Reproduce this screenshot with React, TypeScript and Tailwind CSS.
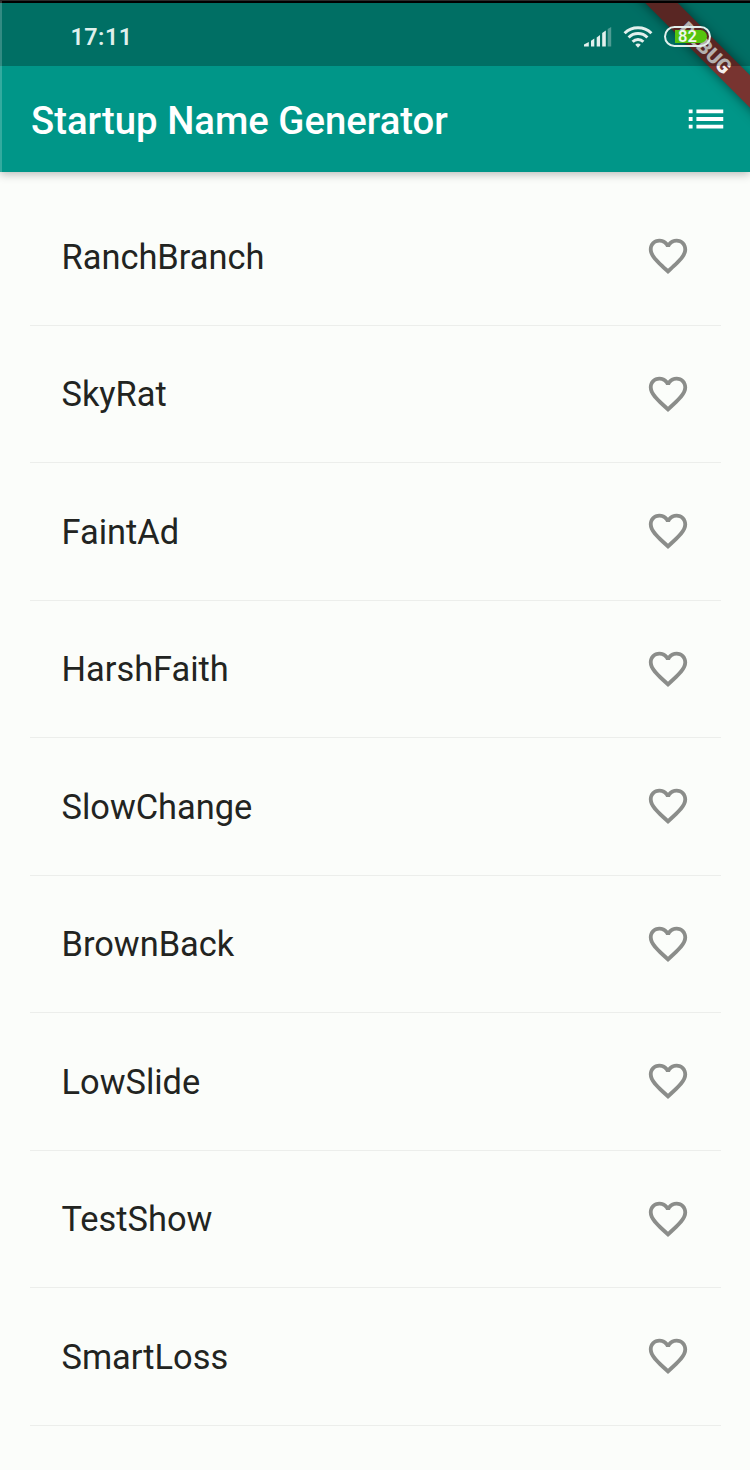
import React from "react";

const names: string[] = [
  "RanchBranch",
  "SkyRat",
  "FaintAd",
  "HarshFaith",
  "SlowChange",
  "BrownBack",
  "LowSlide",
  "TestShow",
  "SmartLoss",
];

function SignalIcon() {
  return (
    <svg className="h-[22px] w-[30px]" viewBox="0 0 30 22" fill="#e2f0ed">
      <path d="M2 20.500v-2l4.800-2.500v4.500z" />
      <path d="M9 20.500v-5.800l3.300-2.200v8z" />
      <path d="M14.700 20.500v-9l3.300-2.500v11.500z" />
      <path d="M20.200 20.500V7l3.600-2.500v16z" />
      <path d="M25.700 20.500V3l3.500-2v19.500z" opacity="0.35" />
    </svg>
  );
}

function WifiIcon() {
  return (
    <svg className="h-[24px] w-[32px]" viewBox="0 0 32 24" fill="none" stroke="#e2f0ed" strokeWidth="3">
      <path d="M2.600 8.200a19 19 0 0 1 26.800 0" />
      <path d="M6.600 12.500a13.300 13.300 0 0 1 18.800 0" />
      <path d="M10.600 16.700a7.700 7.700 0 0 1 10.800 0" />
      <path d="M16 22.800l-2.700-3.100a3.600 3.600 0 0 1 5.400 0z" fill="#e2f0ed" stroke="none" />
    </svg>
  );
}

function Battery() {
  return (
    <div className="relative h-[21px] w-[47px] overflow-hidden rounded-full border-2 border-[#e2f0ed]">
      <div className="absolute top-[2px] left-[9px] h-[13px] w-[32px] rounded-r-full bg-[#55c40e]" />
      <span className="absolute top-[-1px] left-[12px] text-[16.500px] leading-[20px] font-semibold text-[#eef8ec]">
        82
      </span>
    </div>
  );
}

function DebugBanner() {
  return (
    <div className="absolute top-[36px] left-[606px] flex h-[23px] w-[200px] rotate-45 items-center justify-center bg-[#783430] text-[20px] leading-none font-black text-[#f4efee] shadow-[0_0_12px_rgba(0,0,0,0.5)]">
      DEBUG
    </div>
  );
}

function ListIcon() {
  return (
    <svg className="size-[46px]" viewBox="0 0 24 24" fill="#fff">
      <path d="M3 13h2v-2H3v2zm0 4h2v-2H3v2zm0-8h2V7H3v2zm4 4h14v-2H7v2zm0 4h14v-2H7v2zM7 7v2h14V7H7z" />
    </svg>
  );
}

function HeartIcon() {
  return (
    <svg className="size-[46px]" viewBox="0 0 24 24" fill="#8b8d8a">
      <path d="M16.500 3c-1.740 0-3.410.81-4.500 2.090C10.910 3.810 9.240 3 7.500 3 4.420 3 2 5.420 2 8.500c0 3.780 3.400 6.860 8.550 11.540L12 21.350l1.450-1.320C18.600 15.360 22 12.280 22 8.500 22 5.420 19.580 3 16.500 3zm-4.400 15.550l-.1.100-.1-.1C7.140 14.240 4 11.390 4 8.500 4 6.500 5.500 5 7.500 5c1.540 0 3.040.99 3.570 2.360h1.870C13.460 5.990 14.960 5 16.500 5c2 0 3.500 1.500 3.500 3.500 0 2.890-3.140 5.740-7.900 10.050z" />
    </svg>
  );
}

export default function App() {
  return (
    <div className="h-[1470px] w-[750px] overflow-hidden bg-[#fbfdfa] font-['Roboto','Liberation_Sans',sans-serif]">
      <header className="relative h-[172px] bg-[#009688] shadow-[0_2px_9px_rgba(0,0,0,0.28)]">
        <div className="absolute inset-0 overflow-hidden">
          <DebugBanner />
        </div>
        <div className="relative flex h-[66px] items-center border-t-[3px] border-black bg-black/26 pr-[39px] pl-[70.500px]">
          <span className="mt-[7px] flex-1 text-[23.300px] leading-none font-semibold tracking-[0.5px] text-[#dff0ec]">
            17:11
          </span>
          <div className="mt-[4px] flex items-center gap-[10px]">
            <SignalIcon />
            <WifiIcon />
            <Battery />
          </div>
        </div>
        <div className="relative flex h-[106px] items-center justify-between pr-[21px] pl-[31px]">
          <h1 className="pt-[5px] text-[38.300px] leading-none font-medium whitespace-nowrap text-white">
            Startup Name Generator
          </h1>
          <ListIcon />
        </div>
        <div className="absolute top-0 left-0 h-[172px] w-[2px] bg-white/20" />
        <div className="absolute top-0 left-0 h-px w-full bg-[#2b2b2b]" />
      </header>
      <ul className="flex flex-col pt-[16px] pr-[29px] pl-[30px]">
        {names.map((name) => (
          <li
            key={name}
            className="flex h-[137.500px] items-center justify-between border-b-[1.500px] border-[#eceeeb] pr-[30px] pl-[31.500px] text-[34.400px] text-[#222421]"
          >
            <span className="pt-[3px]">{name}</span>
            <HeartIcon />
          </li>
        ))}
      </ul>
    </div>
  );
}
